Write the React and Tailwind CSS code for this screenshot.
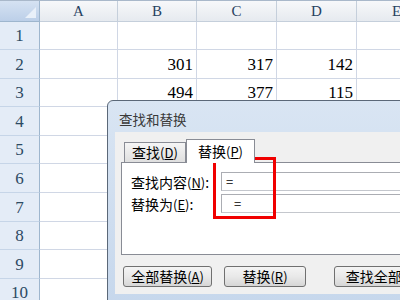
const cols = [
  { name: "A", w: "w-[78px]" },
  { name: "B", w: "w-[79px]" },
  { name: "C", w: "w-[80px]" },
  { name: "D", w: "w-[80px]" },
  { name: "E", w: "w-[80px]" },
];

const rows = [
  { n: 1, h: "h-[28px]", vals: ["", "", "", "", ""] },
  { n: 2, h: "h-[29px]", vals: ["", "301", "317", "142", ""] },
  { n: 3, h: "h-[28px]", vals: ["", "494", "377", "115", ""] },
  { n: 4, h: "h-[29px]", vals: [] },
  { n: 5, h: "h-[28px]", vals: [] },
  { n: 6, h: "h-[29px]", vals: [] },
  { n: 7, h: "h-[29px]", vals: [] },
  { n: 8, h: "h-[28px]", vals: [] },
  { n: 9, h: "h-[29px]", vals: [] },
  { n: 10, h: "h-[28px]", vals: [] },
];

const serif = { fontFamily: '"Liberation Serif", serif' };
const cjk = { fontFamily: '"Noto Sans CJK SC", "Noto Sans", sans-serif' };

function Key({ k }) {
  return (
    <span className="text-[13px]">
      (<span className="underline underline-offset-1">{k}</span>)
    </span>
  );
}

function Grid() {
  return (
    <div className="flex flex-col" style={serif}>
      <div className="flex h-[22px] border-t border-[#a9b8ca]">
        <div className="relative w-[40px] shrink-0 border-r border-b border-[#9eb6ce] bg-gradient-to-b from-[#d5e2f2] to-[#bccfe8]">
          <div className="absolute right-[3px] bottom-[3px] h-0 w-0 border-l-[11px] border-t-[11px] border-l-transparent border-t-transparent border-r-0 border-b-0 [border-bottom:11px_solid_#e9f0f9] [border-left:11px_solid_transparent]" />
        </div>
        {cols.map((c) => (
          <div
            key={c.name}
            className={`${c.w} shrink-0 flex items-center justify-center border-r border-b border-[#c5cfdb] bg-gradient-to-b from-[#f7f8fa] to-[#e6eaef] text-[15px] text-[#27415f]`}
          >
            {c.name}
          </div>
        ))}
      </div>
      {rows.map((r) => (
        <div key={r.n} className={`flex ${r.h}`}>
          <div className="w-[40px] shrink-0 flex items-end justify-center pb-[1px] border-r border-b border-r-[#9eb6ce] border-b-[#c6d5e8] bg-[#e4ecf7] text-[17px] text-[#2d4a63]">
            {r.n}
          </div>
          {cols.map((c, i) => (
            <div
              key={c.name}
              className={`${c.w} shrink-0 flex items-end justify-end pr-[3px] pb-[1px] border-r border-b border-[#d0d7e5] text-[17px] text-black`}
            >
              {r.vals[i] || ""}
            </div>
          ))}
        </div>
      ))}
    </div>
  );
}

function Button({ children, w }) {
  return (
    <div
      className={`${w} shrink-0 h-[21px] flex items-center justify-center rounded-[3px] border border-[#707070] bg-gradient-to-b from-[#f4f4f4] via-[#e9e9e9] to-[#d6d6d6] text-[14px] text-black`}
    >
      {children}
    </div>
  );
}

function Dialog() {
  return (
    <div
      className="absolute left-[107px] top-[100px] w-[320px] h-[210px] rounded-tl-[6px] border border-[#5b6878] bg-gradient-to-b from-[#d9e5f3] to-[#c6d7ec] flex flex-col"
      style={cjk}
    >
      <div className="h-[31px] shrink-0 flex items-end pl-[11px] pb-[3px] text-[13.5px] text-[#3a3a3a]">
        查找和替换
      </div>
      <div className="ml-[7px] h-[162px] bg-[#f0f0f0] flex flex-col pl-[6px] pt-[7px]">
        <div className="flex items-end h-[23px] pl-[3px]">
          <div className="h-[20px] w-[62px] flex items-center justify-center border border-b-0 border-[#898c95] bg-gradient-to-b from-[#f5f5f5] to-[#dfdfdf] text-[14px] text-black">
            查找<Key k="D" />
          </div>
          <div className="relative z-10 -mb-px h-[24px] w-[69px] flex items-center justify-center border border-b-0 border-[#898c95] bg-white text-[14px] text-black">
            替换<Key k="P" />
          </div>
        </div>
        <div className="h-[93px] border border-[#898c95] bg-white flex flex-col gap-[3px] pl-[9px] pt-[9px]">
          <div className="flex items-center h-[19px]">
            <div className="w-[90px] shrink-0 text-[14px] text-black leading-none">
              查找内容<Key k="N" />:
            </div>
            <div className="h-[19px] w-[220px] border border-[#abadb3] border-b-[#c4c7cd] bg-white flex items-center pl-[4px] text-[13px] text-black">
              =
            </div>
          </div>
          <div className="flex items-center h-[19px]">
            <div className="w-[90px] shrink-0 text-[14px] text-black leading-none">
              替换为<Key k="E" />:
            </div>
            <div className="h-[19px] w-[220px] border border-[#abadb3] border-b-[#c4c7cd] bg-white flex items-center pl-[12px] text-[13px] text-black">
              =
            </div>
          </div>
        </div>
        <div className="flex gap-[12px] pl-[2px] pt-[11px]">
          <Button w="w-[89px]">
            全部替换<Key k="A" />
          </Button>
          <Button w="w-[82px]">
            替换<Key k="R" />
          </Button>
          <div className="w-[8px]" />
          <Button w="w-[92px]">
            查找全部<Key k="I" />
          </Button>
        </div>
      </div>
    </div>
  );
}

export default function App() {
  return (
    <div className="relative w-[400px] h-[300px] overflow-hidden bg-white">
      <Grid />
      <Dialog />
      <div className="absolute left-[213px] top-[157px] w-[63px] h-[62px] border-[3px] border-[#f00000]" />
    </div>
  );
}
